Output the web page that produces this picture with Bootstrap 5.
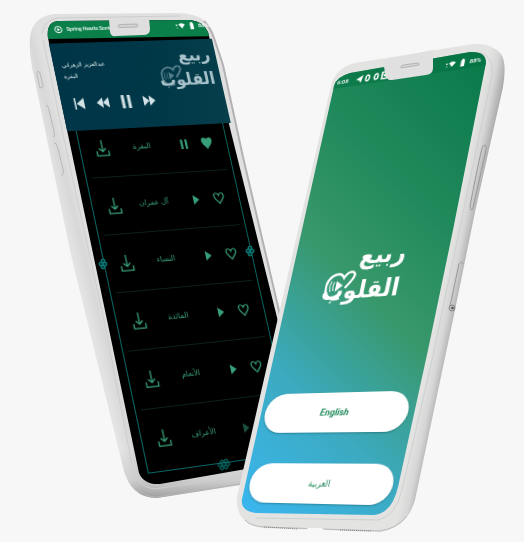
<!DOCTYPE html>
<html lang="ar">
<head>
<meta charset="utf-8">
<meta name="viewport" content="width=device-width, initial-scale=1">
<title>ربيع القلوب</title>
<link href="https://cdn.jsdelivr.net/npm/bootstrap@5.3.0/dist/css/bootstrap.min.css" rel="stylesheet">
<style>
body{background:#f7f7f7;font-family:"DejaVu Sans Condensed","DejaVu Sans",sans-serif;overflow-x:hidden}
.stage{min-height:100vh;overflow:hidden}
.shell{position:absolute;left:0;top:0;width:524px;height:542px;pointer-events:none}
.screen{position:absolute;left:0;top:0;transform-origin:0 0}
.player-screen{width:163px;height:466px}
.welcome-screen{width:153px;height:458px}
button{background:none;border:0;padding:0;color:inherit;line-height:0}
svg{display:block}
.status{height:18px;font:500 6px/8px Roboto,sans-serif;color:#fff}
.status-title{font-size:5px}
.status-tall{height:14px}
.player{height:92px;margin-top:6px;background:linear-gradient(100deg,#003547,#003848 60%,#063e4b);color:#d3e2e6}
.track-info{font-size:6px;line-height:12px;padding:17px 0 0 8px}
.controls{gap:9px;padding:16px 0 0 10px}
.frame{margin:0 8px;border:1px solid #086561;border-top:0;height:348px;color:#38a078}
.sura{height:59px;margin:0 5px;padding:0 9px;display:grid;grid-template-columns:14px 1fr 10px 12px;align-items:center;justify-items:center;border-bottom:1px solid #0b211d;font-size:8px}
.sura .go{margin:0 24px 0 0}
.sura .fav{justify-self:end}
.sura span{padding-right:18px;white-space:nowrap}
.sura:first-child{height:50px;padding-bottom:10px}
.sura:last-child{border:0}
.wordmark{position:relative;font-weight:700;text-align:right;direction:rtl}
.wordmark svg{position:absolute;left:0}
.wordmark-lg{width:76px;margin:167px 0 0 39px;font-size:25px;line-height:35px;color:#fff}
.wordmark-lg svg{top:28px;width:30px;height:40px}
.wordmark-sm{width:54px;margin:4px 6px 0 0;font-size:18px;line-height:26px;color:#a9c3cb}
.wordmark-sm svg{top:20px;width:22px;height:30px;opacity:.5}
.choice{height:40px;margin:0 4px;border-radius:20px;background:#fff;color:#218a5b;box-shadow:0 1px 2px rgba(0,50,50,.35);font-size:9px;line-height:12px}
.choice-en{font:italic 700 9px/12px Roboto,sans-serif}
.choices{gap:31px;padding-bottom:9px}
</style>
<script src="https://cdn.jsdelivr.net/npm/bootstrap@5.3.0/dist/js/bootstrap.bundle.min.js"></script>
</head>
<body>
<svg width="0" height="0" class="position-absolute" aria-hidden="true">
<symbol id="dl" viewBox="0 0 14 20"><path d="M7 1v12M3.500 10 7 13.500 10.500 10M1 13v5h12v-5" fill="none" stroke="currentColor" stroke-width="1.300"/></symbol>
<symbol id="play" viewBox="0 0 10 12"><path d="M2 1v10l6-5z" fill="currentColor"/></symbol>
<symbol id="pause" viewBox="0 0 10 12"><path d="M1.500 1h2.200v10H1.500zM6 1h2.200v10H6z" fill="currentColor"/></symbol>
<symbol id="heart" viewBox="0 0 12 14"><path d="M6 12.500C3.500 9.500 1.200 7 1.200 4.500 1.200 1 5 .8 6 4 7 .8 10.800 1 10.800 4.500 10.800 7 8.500 9.500 6 12.500z" stroke="currentColor" stroke-width="1.200"/></symbol>
<symbol id="sound" viewBox="0 0 30 40"><path d="M17 32C6 36 0 26 1 18 2 8 13 3 18 11c4-9 14-6 9 2-2 4-5 6-6 9" fill="none" stroke="currentColor" stroke-width="2.500"/><path d="M11 14v11l7-6z" fill="currentColor"/><path d="M9 15q-2 4 0 9M6 14q-2.500 5 0 11" fill="none" stroke="currentColor"/></symbol>
<symbol id="wifi" viewBox="0 0 14 10"><path d="M0 3h2v2H0zm1 4h1v2H1zM4 3q4.500-4 9 0L8.500 9z" fill="currentColor"/></symbol>
<symbol id="battery" viewBox="0 0 5 10"><path d="M0 1.500h1.200V0h2v1.500H4.500V10H0z" fill="currentColor"/></symbol>
</svg>
<main class="stage position-relative">
<svg class="shell" viewBox="0 0 524 542" aria-hidden="true">
<defs>
<linearGradient id="body1" gradientUnits="userSpaceOnUse" x1="78" y1="280" x2="98" y2="275"><stop stop-color="#e4e4e4"/><stop offset=".6" stop-color="#d8d8d8"/><stop offset="1" stop-color="#e0e0e0"/></linearGradient>
<linearGradient id="foot1" x1="0" y1="0" x2="0" y2="1"><stop offset=".9" stop-color="#999" stop-opacity="0"/><stop offset=".96" stop-color="#aaa" stop-opacity=".3"/><stop offset="1" stop-color="#777" stop-opacity=".65"/></linearGradient>
</defs>
<path d="M30 39Q31 17 54 14L174 13Q197 13 206 22 211 27 214 36L223 63 243 157 283 330 270 480 240 485 157 498Q130 498 123 467L71 255 32 67Q29 51 30 39Z" fill="url(#body1)"/>
<path d="M30 39Q31 17 54 14L174 13Q197 13 206 22 211 27 214 36L223 63 243 157 283 330 270 480 240 485 157 498Q130 498 123 467L71 255 32 67Q29 51 30 39Z" fill="url(#foot1)"/>
<path d="M204 21Q211 29 214 38L223 65 243 157 283 328" fill="none" stroke="#b5b0b3" stroke-width="2"/>
<path d="M136 489Q145 497 157 497L240 484" fill="none" stroke="#b5b5b5"/>
<path d="M42 34Q43 21 57 18L180 16M43 40 62 130 104 320 133 470Q138 488 155 489L240 476" fill="none" stroke="#cecece"/>
<clipPath id="s1"><path d="M48 38Q46 22 58 21L190 20Q203 21 208 32L210 40 228 120 267 277 290 370 280 463 160 484Q144 485 139 473L107 320 67 130Z"/></clipPath>
<g clip-path="url(#s1)"><path d="M0 0h300v500H0z"/><path d="M40 15H220V36L40 39z" fill="#0a7f4a"/></g>
<path d="M38 71q-2 0 0 8l2 9q3 0 3-2l-3-13zM46 106q1-3 3 4l5 21q1 7-1 6M54 144q2-3 4 5l5 20q1 7-2 6" fill="none" stroke="#b9b9b9"/>
</svg>

<section class="screen player-screen d-flex flex-column" data-quad="44,21 207,17 305,454 140,477">
 <div class="status d-flex align-items-center ps-2">
  <svg width="8" height="9" viewBox="0 0 8 9" class="me-1"><circle cx="4" cy="4.500" r="3.300" fill="none" stroke="#fff"/><path d="M3 2.800v3.400l2.600-1.700z" fill="#fff"/></svg>
  <span class="status-title">Spring Hearts Sonic</span>
  <svg width="10" height="8" class="ms-auto me-1"><use href="#wifi"/></svg><svg width="5" height="8" class="me-1"><use href="#battery"/></svg><span>88%</span>
 </div>
 <div class="player d-flex justify-content-between">
  <div>
   <div class="track-info"><div>عبدالعزيز الزهراني</div><div>البقرة</div></div>
   <div class="controls d-flex">
    <button aria-label="Previous"><svg width="14" height="14" viewBox="0 0 14 14" fill="currentColor"><path d="M2.500 1H4v12H2.500zM12 1v12L4.500 7z"/></svg></button>
    <button aria-label="Rewind"><svg width="14" height="14" viewBox="0 0 14 14" fill="currentColor"><path d="M7 1.500v11L1 7zM13 1.500v11L7 7z"/></svg></button>
    <button aria-label="Pause"><svg width="14" height="14" viewBox="0 0 14 14" fill="currentColor"><path d="M2.500 0h3v14h-3zM8.500 0h3v14h-3z"/></svg></button>
    <button aria-label="Forward"><svg width="14" height="14" viewBox="0 0 14 14" fill="currentColor"><path d="M1 1.500v11L7 7zM7 1.500v11L13 7z"/></svg></button>
   </div>
  </div>
  <div class="wordmark wordmark-sm"><div>ربيع</div><div>القلوب</div><svg><use href="#sound"/></svg></div>
 </div>
 <div class="frame">
  <div class="sura"><button aria-label="Download"><svg width="14" height="19"><use href="#dl"/></svg></button><span>البقرة</span><button class="go" aria-label="Pause"><svg width="10" height="12"><use href="#pause"/></svg></button><button class="fav" aria-label="Favourite"><svg width="12" height="14" fill="currentColor"><use href="#heart"/></svg></button></div>
  <div class="sura"><button aria-label="Download"><svg width="14" height="19"><use href="#dl"/></svg></button><span>آل عمران</span><button class="go" aria-label="Play"><svg width="10" height="12"><use href="#play"/></svg></button><button class="fav" aria-label="Favourite"><svg width="12" height="14" fill="none"><use href="#heart"/></svg></button></div>
  <div class="sura"><button aria-label="Download"><svg width="14" height="19"><use href="#dl"/></svg></button><span>النساء</span><button class="go" aria-label="Play"><svg width="10" height="12"><use href="#play"/></svg></button><button class="fav" aria-label="Favourite"><svg width="12" height="14" fill="none"><use href="#heart"/></svg></button></div>
  <div class="sura"><button aria-label="Download"><svg width="14" height="19"><use href="#dl"/></svg></button><span>المائدة</span><button class="go" aria-label="Play"><svg width="10" height="12"><use href="#play"/></svg></button><button class="fav" aria-label="Favourite"><svg width="12" height="14" fill="none"><use href="#heart"/></svg></button></div>
  <div class="sura"><button aria-label="Download"><svg width="14" height="19"><use href="#dl"/></svg></button><span>الأنعام</span><button class="go" aria-label="Play"><svg width="10" height="12"><use href="#play"/></svg></button><button class="fav" aria-label="Favourite"><svg width="12" height="14" fill="none"><use href="#heart"/></svg></button></div>
  <div class="sura"><button aria-label="Download"><svg width="14" height="19"><use href="#dl"/></svg></button><span>الأعراف</span><button class="go opacity-50" aria-label="Play"><svg width="10" height="12"><use href="#play"/></svg></button><button class="fav" aria-label="Favourite"><svg width="12" height="14" fill="none"><use href="#heart"/></svg></button></div>
 </div>
</section>

<svg class="shell" viewBox="0 0 524 542" aria-hidden="true">
<defs>
<linearGradient id="body2" gradientUnits="userSpaceOnUse" x1="448" y1="262" x2="468" y2="266"><stop stop-color="#e3e3e2"/><stop offset=".45" stop-color="#d6d6d6"/><stop offset="1" stop-color="#a5a5a5"/></linearGradient>
<linearGradient id="wall" gradientUnits="userSpaceOnUse" x1="240" y1="505" x2="585" y2="160"><stop stop-color="#3ab6ee"/><stop offset=".25" stop-color="#3caac0"/><stop offset=".49" stop-color="#38986c"/><stop offset=".7" stop-color="#218a5c"/><stop offset="1" stop-color="#0a794a"/></linearGradient>
<g id="rosette" fill="#063f3d" stroke="#0a8580"><circle cy="-3" r="2"/><circle cy="3" r="2"/><circle cx="-2" r="2"/><circle cx="2" r="2"/></g>
</defs>
<use href="#rosette" x="103" y="264"/><use href="#rosette" x="250" y="251"/>
<g opacity=".7"><use href="#rosette" x="222" y="465"/><use href="#rosette" x="226" y="464"/></g>
<path d="M109 19 110 32Q111 37 116 36L143 35Q150 35 150 29L149 18z" fill="#dedede"/><path d="M118 26.500q0-2 2-2l17-.5q2 1 0 3l-17 .5q-2 0-2-1z" fill="#d3d3d3" stroke="#aaa" stroke-width=".8"/>
<path d="M331 86Q335 68 355 63L473 44Q490 42 501 54 507 62 503 87L475 212 455 310 415 500Q407 528 380 532L263 528Q235 524 237 497Z" fill="url(#body2)"/>
<path d="M245 520Q250 526 264 527L380 531Q396 529 407 516" fill="none" stroke="#b8b8b8"/>
<path d="M479 52Q494 56 492 75L432 360 402 490Q396 516 378 520L256 518" fill="none" stroke="#cdd0d0"/>
<path d="M305 530l3-2h14l3 3v2h-20z" fill="#f7f7f7"/>
<path d="M264 527l34 2M340 530l32 1" stroke="#888" stroke-dasharray="1 1"/>
<clipPath id="s2"><path d="M334 86Q336 77 350 73L470 52Q486 51 486 63L453 230 428 350 398 487Q392 513 374 515L256 513Q240 511 242 499Z"/></clipPath>
<g clip-path="url(#s2)"><path d="M230 40h270v480H230z" fill="url(#wall)"/><path d="M320 40h180V63L320 91z" fill="#00703d" opacity=".5"/></g>
<path d="M486 147q0-3-3-1-2 3-13 60 1 7 3 2l13-58zM463 264q-1-4-4 0l-9 42" fill="none" stroke="#999"/><circle cx="452" cy="308" r="3" fill="#bbb" stroke="#888"/><circle cx="452.500" cy="308" r="1.300" fill="#555"/>
</svg>

<section class="screen welcome-screen d-flex flex-column" data-quad="335,77 487,52 391,515 240,511">
 <div class="status status-tall d-flex align-items-center px-1">
  <span class="me-2">6:08</span>
  <svg width="34" height="10" viewBox="0 0 34 10"><path d="M0 5 7 1 5.500 9 3.500 6.500z" fill="#fff"/><g fill="none" stroke="#fff" stroke-width="1.600"><ellipse cx="12" cy="5" rx="1.800" ry="3"/><ellipse cx="21" cy="5" rx="1.800" ry="3"/><path d="M27 1.500h5v7h-5zM28.500 4l1.500 1.500L32 3"/></g></svg>
  <svg width="10" height="8" class="ms-auto me-1"><use href="#wifi"/></svg><svg width="5" height="8" class="me-1"><use href="#battery"/></svg><span>88%</span>
 </div>
 <div class="wordmark wordmark-lg"><div>ربيع</div><div>القلوب</div><svg><use href="#sound"/></svg></div>
 <div class="choices d-flex flex-column mt-auto">
  <button class="choice choice-en" lang="en">English</button>
  <button class="choice">العربية</button>
 </div>
</section>

<svg class="shell" viewBox="0 0 524 542" aria-hidden="true"><path d="M383 60 385 73Q386 81 392 80L426 75Q433 74 433 68L433 50z" fill="#e0e0e0"/><path d="M401 67q0-2 3-2l13-2q3 0 2 2l-18 3z" fill="#d6d6d6" stroke="#aaa" stroke-width=".8"/></svg>
</main>
<script>
// Projects each flat screen onto the four corners of its phone's glass.
document.querySelectorAll('.screen').forEach(el => {
  const [a, b, c, d] = el.dataset.quad.split(' ').map(p => p.split(',').map(Number));
  const w = el.offsetWidth, h = el.offsetHeight;
  const dx1 = b[0] - c[0], dy1 = b[1] - c[1], dx2 = d[0] - c[0], dy2 = d[1] - c[1];
  const sx = a[0] - b[0] + c[0] - d[0], sy = a[1] - b[1] + c[1] - d[1];
  const den = dx1 * dy2 - dx2 * dy1;
  const g = (sx * dy2 - dx2 * sy) / den, k = (dx1 * sy - sx * dy1) / den;
  const m = [
    (b[0] - a[0] + g * b[0]) / w, (b[1] - a[1] + g * b[1]) / w, 0, g / w,
    (d[0] - a[0] + k * d[0]) / h, (d[1] - a[1] + k * d[1]) / h, 0, k / h,
    0, 0, 1, 0, a[0], a[1], 0, 1];
  el.style.transform = `matrix3d(${m.join()})`;
});
</script>
</body>
</html>
